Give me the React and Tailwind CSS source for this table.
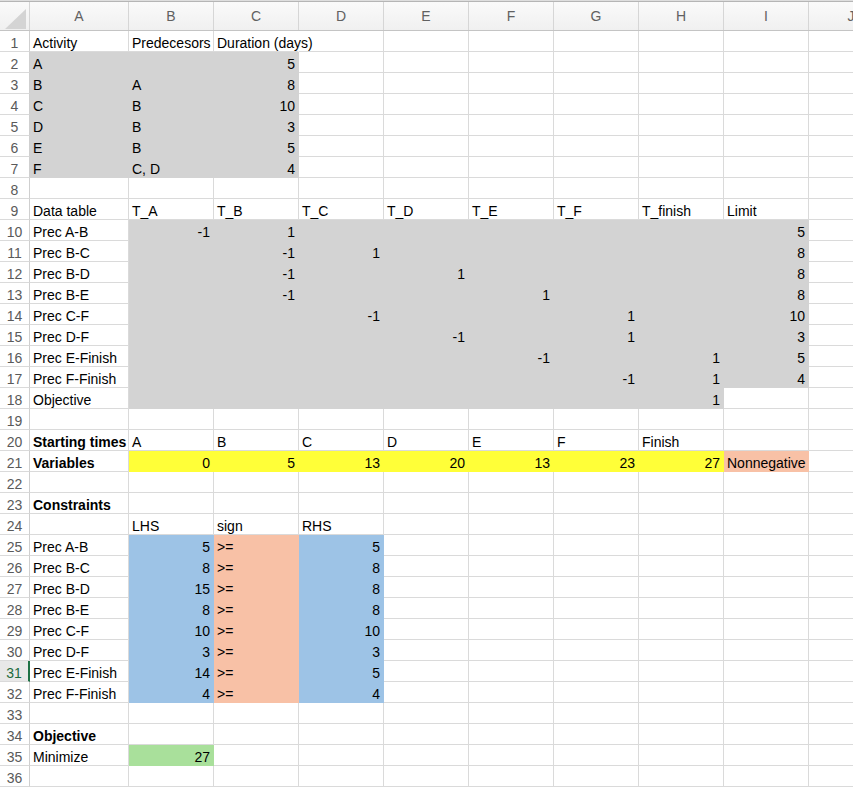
import React from "react";

const COLS = ["A", "B", "C", "D", "E", "F", "G", "H", "I", "J"];

const FILLS = {
    g: "bg-[#d3d3d3] border-[#d3d3d3]",
    y: "bg-[#ffff38] border-[#ffff38]",
    o: "bg-[#f8c1a6] border-[#f8c1a6]",
    b: "bg-[#9dc3e6] border-[#9dc3e6]",
    n: "bg-[#a9e09b] border-[#a9e09b]",
};

const DATA = {
    1: { A: "Activity", B: "Predecesors", C: "Duration (days)" },
    2: { A: "A", C: 5 },
    3: { A: "B", B: "A", C: 8 },
    4: { A: "C", B: "B", C: 10 },
    5: { A: "D", B: "B", C: 3 },
    6: { A: "E", B: "B", C: 5 },
    7: { A: "F", B: "C, D", C: 4 },
    9: { A: "Data table", B: "T_A", C: "T_B", D: "T_C", E: "T_D", F: "T_E", G: "T_F", H: "T_finish", I: "Limit" },
    10: { A: "Prec A-B", B: -1, C: 1, I: 5 },
    11: { A: "Prec B-C", C: -1, D: 1, I: 8 },
    12: { A: "Prec B-D", C: -1, E: 1, I: 8 },
    13: { A: "Prec B-E", C: -1, F: 1, I: 8 },
    14: { A: "Prec C-F", D: -1, G: 1, I: 10 },
    15: { A: "Prec D-F", E: -1, G: 1, I: 3 },
    16: { A: "Prec E-Finish", F: -1, H: 1, I: 5 },
    17: { A: "Prec F-Finish", G: -1, H: 1, I: 4 },
    18: { A: "Objective", H: 1 },
    20: { A: "Starting times", B: "A", C: "B", D: "C", E: "D", F: "E", G: "F", H: "Finish" },
    21: { A: "Variables", B: 0, C: 5, D: 13, E: 20, F: 13, G: 23, H: 27, I: "Nonnegative" },
    23: { A: "Constraints" },
    24: { B: "LHS", C: "sign", D: "RHS" },
    25: { A: "Prec A-B", B: 5, C: ">=", D: 5 },
    26: { A: "Prec B-C", B: 8, C: ">=", D: 8 },
    27: { A: "Prec B-D", B: 15, C: ">=", D: 8 },
    28: { A: "Prec B-E", B: 8, C: ">=", D: 8 },
    29: { A: "Prec C-F", B: 10, C: ">=", D: 10 },
    30: { A: "Prec D-F", B: 3, C: ">=", D: 3 },
    31: { A: "Prec E-Finish", B: 14, C: ">=", D: 5 },
    32: { A: "Prec F-Finish", B: 4, C: ">=", D: 4 },
    34: { A: "Objective" },
    35: { A: "Minimize", B: 27 },
};

const BOLD = { "20A": true, "21A": true, "23A": true, "34A": true };

// which fill a cell gets
function fillAt(r, c) {
    const i = COLS.indexOf(c);
    if (r >= 2 && r <= 7 && i <= 2) return "g";
    if (r >= 10 && r <= 17 && i >= 1 && i <= 8) return "g";
    if (r === 18 && i >= 1 && i <= 7) return "g";
    if (r === 21 && i >= 1 && i <= 7) return "y";
    if (r === 21 && c === "I") return "o";
    if (r >= 25 && r <= 32) {
        if (c === "B" || c === "D") return "b";
        if (c === "C") return "o";
    }
    if (r === 35 && c === "B") return "n";
    return null;
}

function Cell({ r, c }) {
    const v = DATA[r]?.[c];
    const fill = fillAt(r, c);
    const isNum = typeof v === "number";
    const width = c === "A" ? "w-[99px]" : "w-[85px]";
    const color = fill ? FILLS[fill] : "border-[#dadada]";
    const overflow = r === 1 && c === "C" ? "border-r-transparent" : "";
    return (
        <div
            className={`${width} ${color} ${overflow} shrink-0 h-[21px] border-r border-b flex items-end whitespace-nowrap leading-4 ${isNum ? "justify-end pr-[3px]" : "justify-start pl-[3px]"} ${BOLD[`${r}${c}`] ? "font-bold" : ""}`}
        >
            {v !== undefined ? String(v) : ""}
        </div>
    );
}

function Row({ r }) {
    const selected = r === 31;
    return (
        <div className="flex">
            <div
                className={`w-[30px] shrink-0 h-[21px] border-b border-[#dadada] flex items-end justify-center leading-4 ${selected ? "bg-[#e8e8e8] text-[#1d6b3d] border-r-2 border-r-[#1e7145]" : "text-[#5a5a5a] border-r border-r-[#cfcfcf]"}`}
            >
                {r}
            </div>
            {COLS.map((c) => (
                <Cell key={c} r={r} c={c} />
            ))}
        </div>
    );
}

export default function App() {
    const rows = Array.from({ length: 36 }, (_, i) => i + 1);

    return (
        <div className="w-[853px] h-[789px] overflow-hidden bg-white text-black text-[14px] font-['Liberation_Sans',Arial,sans-serif]">
            {/* Top edge */}
            <div className="h-px bg-[#dedede]" />
            <div className="h-px bg-[#b5b5b5]" />

            {/* Column headers */}
            <div className="flex h-[29px] border-b border-[#c4c4c4] bg-gradient-to-b from-[#fafafa] to-[#f0f0f0]">
                <div className="w-[30px] shrink-0 border-r border-[#d6d6d6] relative">
                    <svg className="absolute left-[5px] top-[7px]" width="21" height="20" viewBox="0 0 21 20">
                        <polygon points="21,0 21,20 0,20" fill="#d4d4d4" />
                    </svg>
                </div>
                {COLS.map((c) => (
                    <div
                        key={c}
                        className={`${c === "A" ? "w-[99px]" : "w-[85px]"} shrink-0 border-r border-[#d6d6d6] flex items-center justify-center text-[#616161]`}
                    >
                        {c}
                    </div>
                ))}
            </div>

            {/* Sheet body */}
            {rows.map((r) => (
                <Row key={r} r={r} />
            ))}
        </div>
    );
}
